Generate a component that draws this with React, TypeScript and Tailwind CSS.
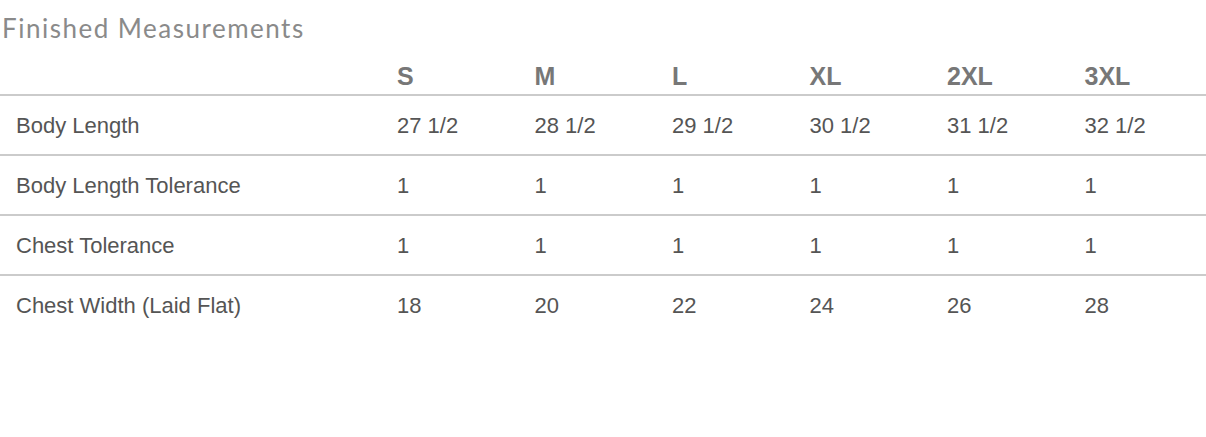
const SIZES = ["S", "M", "L", "XL", "2XL", "3XL"];

const ROWS: { label: string; values: string[] }[] = [
  {
    label: "Body Length",
    values: ["27 1/2", "28 1/2", "29 1/2", "30 1/2", "31 1/2", "32 1/2"],
  },
  { label: "Body Length Tolerance", values: ["1", "1", "1", "1", "1", "1"] },
  { label: "Chest Tolerance", values: ["1", "1", "1", "1", "1", "1"] },
  {
    label: "Chest Width (Laid Flat)",
    values: ["18", "20", "22", "24", "26", "28"],
  },
];

export default function App() {
  return (
    <main className="h-[437px] w-[1206px] bg-white font-['Liberation_Sans',Arial,sans-serif]">
      <div className="h-[56px] pl-[2px] pt-[12px] font-['Lato',sans-serif] text-[26px] leading-[32px] tracking-[1.5px] text-[#8a8a8a]">
        Finished Measurements
      </div>

      {/* size header */}
      <div className="grid h-[40px] grid-cols-[381px_repeat(6,1fr)] items-center border-b-2 border-[#cbcbcb] pt-[2px] text-[25px] font-bold text-[#777]">
        <div />
        {SIZES.map((s) => (
          <div key={s} className="pl-4">
            {s}
          </div>
        ))}
      </div>

      {ROWS.map((row, r) => (
        <div
          key={row.label}
          className={
            r < ROWS.length - 1
              ? "grid h-[60px] grid-cols-[381px_repeat(6,1fr)] items-center border-b-2 border-[#cbcbcb] text-[22px] text-[#555]"
              : "grid h-[60px] grid-cols-[381px_repeat(6,1fr)] items-center pb-[2px] text-[22px] text-[#555]"
          }
        >
          <div className="pl-4">{row.label}</div>
          {row.values.map((v, i) => (
            <div key={i} className="pl-4">
              {v}
            </div>
          ))}
        </div>
      ))}
    </main>
  );
}
